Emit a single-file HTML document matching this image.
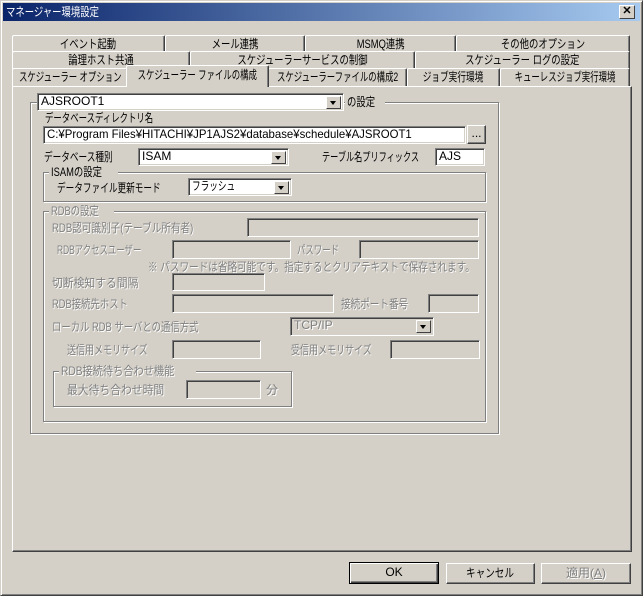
<!DOCTYPE html><html><head><meta charset="utf-8"><style>
*{margin:0;padding:0;box-sizing:border-box}
body{width:643px;height:596px;background:#d4d0c8;font:12px "Liberation Sans","Noto Sans CJK JP",sans-serif;position:relative;overflow:hidden;color:#000}
.a{position:absolute;white-space:nowrap;line-height:14px}
.s{display:inline-block;transform:scaleX(.78);transform-origin:left center;white-space:nowrap;flex-shrink:0}
.win{position:absolute;left:0;top:0;width:643px;height:596px;border:1px solid;border-color:#d4d0c8 #404040 #404040 #d4d0c8;box-shadow:inset 1px 1px #fff,inset -1px -1px #808080}
.title{position:absolute;left:3px;top:3px;width:637px;height:18px;background:linear-gradient(90deg,#0a246a,#a6caf0);color:#fff;padding:2px 3px;font-size:12px;line-height:14px}
.cl{position:absolute;left:619px;top:5px;width:16px;height:14px;background:#d4d0c8;border:1px solid;border-color:#fff #404040 #404040 #fff;font:bold 11px "Liberation Sans";text-align:center;line-height:11px;color:#000}
.tab{position:absolute;height:18px;border:1px solid;border-bottom:none;border-color:#fff #404040 #404040 #fff;box-shadow:inset -1px 0 #808080;display:flex;justify-content:center;line-height:16px;border-radius:2px 2px 0 0;background:#d4d0c8;white-space:nowrap}
.tab .s{transform-origin:center center}
.panel{position:absolute;left:12px;top:86px;width:620px;height:466px;border:1px solid;border-color:#fff #404040 #404040 #fff;box-shadow:inset -1px -1px #808080}
.f{position:absolute;background:#fff;border:1px solid;border-color:#808080 #fff #fff #808080;box-shadow:inset 1px 1px #404040,inset -1px -1px #d4d0c8;padding:1px 3px;line-height:13px;white-space:nowrap;overflow:hidden}
.d{background:#d4d0c8}
.g{position:absolute;border:1px solid #808080;box-shadow:1px 1px #fff,inset 1px 1px #fff}
.dis{color:#808080;text-shadow:1px 1px #fff}
.ar{position:absolute;right:2px;top:2px;width:15px;height:13px;background:#d4d0c8;border:1px solid;border-color:#fff #404040 #404040 #fff}
.ar:after{content:"";position:absolute;left:3px;top:4px;border:3.5px solid transparent;border-top:4px solid #000}
.btn{position:absolute;height:21px;border:1px solid;border-color:#fff #404040 #404040 #fff;box-shadow:inset -1px -1px #808080;text-align:center;line-height:19px}
.lb{background:#d4d0c8;padding:0 2px}
</style></head><body>
<div class="win"></div>
<div class="title"><span class="s">マネージャー環境設定</span></div>
<div class="cl">✕</div>

<div class="tab" style="left:12px;top:35px;width:153px"><span class="s">イベント起動</span></div>
<div class="tab" style="left:165px;top:35px;width:140px"><span class="s">メール連携</span></div>
<div class="tab" style="left:305px;top:35px;width:151px"><span class="s">MSMQ連携</span></div>
<div class="tab" style="left:456px;top:35px;width:174px"><span class="s">その他のオプション</span></div>
<div class="tab" style="left:12px;top:51px;width:178px"><span class="s">論理ホスト共通</span></div>
<div class="tab" style="left:190px;top:51px;width:225px"><span class="s">スケジューラーサービスの制御</span></div>
<div class="tab" style="left:415px;top:51px;width:215px"><span class="s">スケジューラー ログの設定</span></div>
<div class="tab" style="left:12px;top:68px;width:116px"><span class="s" style="transform:scaleX(.7)">スケジューラー オプション</span></div>
<div class="tab" style="left:268px;top:68px;width:139px"><span class="s" style="transform:scaleX(.7)">スケジューラーファイルの構成2</span></div>
<div class="tab" style="left:407px;top:68px;width:93px"><span class="s" style="transform:scaleX(.72)">ジョブ実行環境</span></div>
<div class="tab" style="left:500px;top:68px;width:130px"><span class="s" style="transform:scaleX(.7)">キューレスジョブ実行環境</span></div>
<div class="panel"></div>
<div class="tab" style="left:126px;top:65px;width:143px;height:22px;z-index:2;line-height:18px;box-shadow:inset -1px 0 #808080,0 2px #d4d0c8"><span class="s" style="transform:scaleX(.7)">スケジューラー ファイルの構成</span></div>

<div class="g" style="left:30px;top:102px;width:469px;height:332px"></div>
<div class="f" style="left:37px;top:93px;width:307px;height:18px">AJSROOT1<div class="ar"></div></div>
<div class="a lb" style="left:345px;top:95px"><span class="s">の設定</span></div>
<div class="a" style="left:45px;top:111px"><span class="s" style="transform:scaleX(.7)">データベースディレクトリ名</span></div>
<div class="f" style="left:43px;top:126px;width:423px;height:18px"><span class="s" style="transform:scaleX(.95)">C:¥Program Files¥HITACHI¥JP1AJS2¥database¥schedule¥AJSROOT1</span></div>
<div class="btn" style="left:467px;top:125px;width:19px;height:19px;line-height:15px">...</div>
<div class="a" style="left:44px;top:150px"><span class="s" style="transform:scaleX(.72)">データベース種別</span></div>
<div class="f" style="left:138px;top:148px;width:151px;height:18px">ISAM<div class="ar"></div></div>
<div class="a" style="left:322px;top:150px"><span class="s" style="transform:scaleX(.68)">テーブル名プリフィックス</span></div>
<div class="f" style="left:435px;top:148px;width:50px;height:18px">AJS</div>

<div class="g" style="left:43px;top:172px;width:443px;height:30px"></div>
<div class="a lb" style="left:49px;top:165px"><span class="s">ISAMの設定</span></div>
<div class="a" style="left:57px;top:181px"><span class="s" style="transform:scaleX(.72)">データファイル更新モード</span></div>
<div class="f" style="left:188px;top:178px;width:104px;height:18px"><span class="s" style="transform:scaleX(.72)">フラッシュ</span><div class="ar"></div></div>

<div class="g" style="left:43px;top:211px;width:443px;height:211px"></div>
<div class="a lb dis" style="left:49px;top:204px"><span class="s">RDBの設定</span></div>
<div class="a dis" style="left:52px;top:221px"><span class="s" style="transform:scaleX(.8)">RDB認可識別子(テーブル所有者)</span></div>
<div class="f d" style="left:247px;top:218px;width:232px;height:19px"></div>
<div class="a dis" style="left:57px;top:243px"><span class="s" style="transform:scaleX(.7)">RDBアクセスユーザー</span></div>
<div class="f d" style="left:172px;top:240px;width:119px;height:19px"></div>
<div class="a dis" style="left:297px;top:243px"><span class="s" style="transform:scaleX(.7)">パスワード</span></div>
<div class="f d" style="left:359px;top:240px;width:120px;height:19px"></div>
<div class="a dis" style="left:148px;top:260px"><span class="s" style="transform:scaleX(.8)">※ パスワードは省略可能です。指定するとクリアテキストで保存されます。</span></div>
<div class="a dis" style="left:52px;top:276px"><span class="s" style="transform:scaleX(.9)">切断検知する間隔</span></div>
<div class="f d" style="left:172px;top:273px;width:93px;height:18px"></div>
<div class="a dis" style="left:52px;top:297px"><span class="s" style="transform:scaleX(.78)">RDB接続先ホスト</span></div>
<div class="f d" style="left:172px;top:294px;width:162px;height:19px"></div>
<div class="a dis" style="left:341px;top:297px"><span class="s" style="transform:scaleX(.8)">接続ポート番号</span></div>
<div class="f d" style="left:428px;top:294px;width:51px;height:19px"></div>
<div class="a dis" style="left:52px;top:320px"><span class="s" style="transform:scaleX(.78)">ローカル RDB サーバとの通信方式</span></div>
<div class="f d dis" style="left:290px;top:317px;width:144px;height:19px">TCP/IP<div class="ar" style="box-shadow:none"></div></div>
<div class="a dis" style="left:67px;top:343px"><span class="s" style="transform:scaleX(.75)">送信用メモリサイズ</span></div>
<div class="f d" style="left:172px;top:340px;width:89px;height:19px"></div>
<div class="a dis" style="left:291px;top:343px"><span class="s" style="transform:scaleX(.75)">受信用メモリサイズ</span></div>
<div class="f d" style="left:390px;top:340px;width:90px;height:19px"></div>
<div class="g" style="left:53px;top:371px;width:239px;height:36px"></div>
<div class="a lb dis" style="left:59px;top:364px"><span class="s" style="transform:scaleX(.85)">RDB接続待ち合わせ機能</span></div>
<div class="a dis" style="left:67px;top:383px"><span class="s" style="transform:scaleX(.9)">最大待ち合わせ時間</span></div>
<div class="f d" style="left:186px;top:380px;width:75px;height:19px"></div>
<div class="a dis" style="left:266px;top:383px">分</div>

<div class="btn" style="left:349px;top:562px;width:90px;height:22px;border:1px solid #000;box-shadow:inset 1px 1px #fff,inset -1px -1px #404040,inset -2px -2px #808080">OK</div>
<div class="btn" style="left:446px;top:563px;width:89px"><span class="s" style="transform:scaleX(.8);transform-origin:center">キャンセル</span></div>
<div class="btn dis" style="left:541px;top:563px;width:90px">適用(<u>A</u>)</div>
</body></html>
